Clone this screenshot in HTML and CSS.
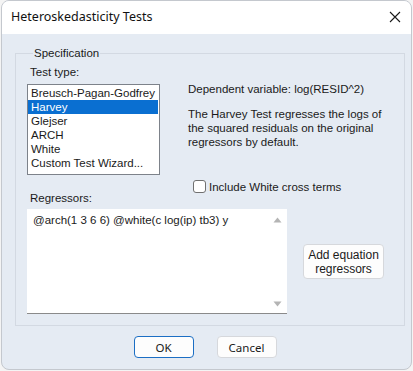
FILE: index.html
```html
<!DOCTYPE html>
<html>
<head>
<meta charset="utf-8">
<link rel="stylesheet" href="styles.css">
</head>
<body>
<div class="window">
  <div class="titlebar">
    <span class="title">Heteroskedasticity Tests</span>
    <svg class="close" width="12" height="12" viewBox="0 0 12 12"><path d="M1 1L11 11M11 1L1 11" stroke="#1a1a1a" stroke-width="1.1" fill="none"/></svg>
  </div>
  <div class="content">
    <fieldset class="group">
      <legend>Specification</legend>
      <div class="top">
        <div class="left">
          <div class="label">Test type:</div>
          <ul class="list">
            <li>Breusch-Pagan-Godfrey</li>
            <li class="sel">Harvey</li>
            <li>Glejser</li>
            <li>ARCH</li>
            <li>White</li>
            <li>Custom Test Wizard...</li>
          </ul>
        </div>
        <div class="right">
          <p class="dep">Dependent variable: log(RESID^2)</p>
          <p class="desc">The Harvey Test regresses the logs of the squared residuals on the original regressors by default.</p>
        </div>
      </div>
      <label class="check"><span class="box"></span>Include White cross terms</label>
      <div class="label reg">Regressors:</div>
      <div class="regrow">
        <div class="edit">
          <div class="text">@arch(1 3 6 6) @white(c log(ip) tb3) y</div>
          <div class="scroll">
            <svg width="9" height="6" viewBox="0 0 9 6"><path d="M4.5 0.5L8.5 5.5H0.5Z" fill="#b4b4b4"/></svg>
            <svg width="9" height="6" viewBox="0 0 9 6"><path d="M0.5 0.5H8.5L4.5 5.5Z" fill="#b4b4b4"/></svg>
          </div>
        </div>
        <button class="btn addeq">Add equation<br>regressors</button>
      </div>
    </fieldset>
    <div class="buttons">
      <button class="btn ok">OK</button>
      <button class="btn cancel">Cancel</button>
    </div>
  </div>
</div>
</body>
</html>
```
FILE: styles.css
```css
html, body {
  margin: 0;
  padding: 0;
  background: #f4f4f4;
}
body {
  width: 413px;
  height: 371px;
  overflow: hidden;
  font-family: "Liberation Sans", Arial, sans-serif;
  font-size: 11px;
  color: #1a1a1a;
}
.window {
  margin-left: 1px;
  width: 409px;
  height: 368px;
  border: 1px solid #c4c8ce;
  border-radius: 8px;
  overflow: hidden;
  background: #e5ebf3;
}
.titlebar {
  height: 33px;
  background: #ffffff;
  display: flex;
  align-items: center;
  justify-content: space-between;
  padding: 0 10px 2px 9px;
  box-sizing: border-box;
}
.title {
  font-family: "Noto Sans", sans-serif;
  font-size: 12.5px;
  color: #111;
}
.content {
  padding: 12px 6px 0 13px;
}
.group {
  margin: 0;
  border: 1px solid #d3d9e2;
  padding: 5px 0 9px 11px;
  height: 280px;
  box-sizing: border-box;
}
.group legend {
  padding: 0 1px;
  margin-left: 6px;
  line-height: 14px;
  font-size: 11.5px;
}
.label {
  line-height: 14px;
  padding-left: 3px;
  font-size: 11.5px;
}
.top {
  display: flex;
}
.left {
  width: 133px;
}
.list {
  list-style: none;
  margin: 5px 0 0 0;
  padding: 1px 0 4px 0;
  background: #fff;
  border: 1px solid #7d828a;
  box-sizing: border-box;
  height: 91px;
}
.list li {
  height: 14px;
  line-height: 14px;
  padding-left: 3px;
  font-size: 11.5px;
}
.list li.sel {
  background: #0a6fd1;
  color: #fff;
  margin-right: 1px;
}
.right {
  margin-left: 28px;
  padding-top: 17px;
}
.right p {
  margin: 0;
  line-height: 14px;
  font-size: 11.5px;
}
.desc {
  margin-top: 11px !important;
  width: 212px;
}
.check {
  display: flex;
  align-items: center;
  margin: 5px 0 0 166px;
  height: 13px;
  font-size: 11.5px;
}
.box {
  width: 11px;
  height: 11px;
  border: 1px solid #707070;
  border-radius: 3px;
  background: #fff;
  margin-right: 3px;
}
.reg {
  margin-top: -2px;
}
.regrow {
  display: flex;
  align-items: center;
  margin-top: 4px;
}
.edit {
  width: 260px;
  height: 105px;
  background: #fff;
  border-bottom: 1px solid #8a8a8a;
  box-sizing: border-box;
  display: flex;
}
.text {
  flex: 1;
  padding: 4px 0 0 6px;
  line-height: 14px;
  font-size: 11.5px;
}
.scroll {
  width: 17px;
  display: flex;
  flex-direction: column;
  justify-content: space-between;
  align-items: center;
  padding: 8px 0 6px;
  margin-right: 1px;
}
.btn {
  font-family: "Liberation Sans", Arial, sans-serif;
  font-size: 11.5px;
  color: #1a1a1a;
  background: #fdfdfd;
  border: 1px solid #d6d8dc;
  border-radius: 4px;
  padding: 0;
}
.addeq {
  width: 81px;
  height: 35px;
  line-height: 14px;
  margin: 0 0 0 16px;
  font-size: 12px;
}
.buttons {
  display: flex;
  justify-content: center;
  gap: 23px;
  margin-top: 10px;
  padding-right: 10px;
}
.ok, .cancel {
  width: 60px;
  height: 22px;
  font-family: "Noto Sans", sans-serif;
  font-size: 11.5px;
}
.ok {
  border: 1.5px solid #1b6ec4;
}
```
